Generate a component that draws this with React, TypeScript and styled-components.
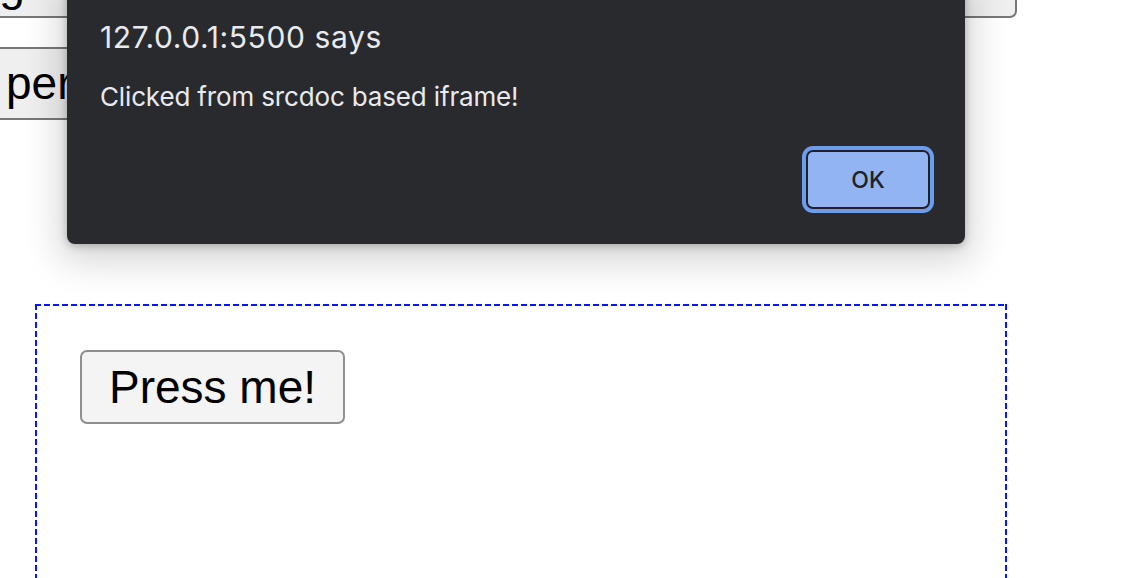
import React from "react";
import styled, { createGlobalStyle } from "styled-components";

const Global = createGlobalStyle`
  html, body {
    margin: 0;
    padding: 0;
    background: #ffffff;
    overflow: hidden;
  }
`;

const Page = styled.div`
  position: relative;
  width: 1124px;
  height: 578px;
  overflow: hidden;
  background: #ffffff;
`;

const Backdrop = styled.div`
  display: flex;
  flex-direction: column;
  align-items: flex-start;
`;

const PageButton = styled.button<{ $muted?: boolean }>`
  box-sizing: border-box;
  font-family: "Liberation Sans", Arial, sans-serif;
  font-size: 46px;
  line-height: 53px;
  color: #000000;
  background: ${(p) => (p.$muted ? "#efefef" : "#f4f4f4")};
  border: 2px solid ${(p) => (p.$muted ? "#777777" : "#8f8f8f")};
  border-radius: 7px;
  padding: 8px 27px;
  white-space: nowrap;
  text-align: left;
  cursor: default;
`;

const TopButton = styled(PageButton)`
  width: 1129px;
  margin-left: -112px;
  margin-top: -52px;
  padding: 8px 12px 5px;
`;

const WideButton = styled(PageButton)`
  margin-left: -23px;
  margin-top: 29px;
`;

const FrameBox = styled.div`
  box-sizing: border-box;
  margin-top: 184px;
  margin-left: 35px;
  width: 972px;
  height: 320px;
  padding: 46px 0 0 45px;
  background:
    repeating-linear-gradient(90deg, #0a14ff 0 6px, transparent 6px 9px) top left / 100% 2px no-repeat,
    repeating-linear-gradient(90deg, #0a14ff 0 6px, transparent 6px 9px) bottom left / 100% 2px no-repeat,
    repeating-linear-gradient(180deg, #0a14ff 0 6px, transparent 6px 9px) top left / 2px 100% no-repeat,
    repeating-linear-gradient(180deg, #0a14ff 0 6px, transparent 6px 9px) top right / 2px 100% no-repeat;
`;

const PressButton = styled(PageButton)`
  padding: 9px 27px 8px;
`;

const Dialog = styled.div`
  position: absolute;
  top: -20px;
  left: 67px;
  width: 898px;
  box-sizing: border-box;
  padding: 40px 35px 35px 33px;
  background: #292a2d;
  border-radius: 8px;
  box-shadow: 0 10px 36px 8px rgba(0, 0, 0, 0.16), 0 2px 8px rgba(0, 0, 0, 0.25);
  display: flex;
  flex-direction: column;
  font-family: Inter, "Noto Sans", sans-serif;
  color: #e8eaed;
`;

const Title = styled.div`
  font-size: 30px;
  line-height: 34px;
  letter-spacing: 0.6px;
`;

const Message = styled.div`
  margin-top: 27px;
  font-size: 26px;
  line-height: 32px;
  letter-spacing: -0.15px;
`;

const Actions = styled.div`
  margin-top: 37px;
  display: flex;
  justify-content: flex-end;
`;

const OkButton = styled.button`
  box-sizing: border-box;
  width: 124px;
  height: 59px;
  border: 2px solid #202124;
  border-radius: 7px;
  background: #93b4f3;
  box-shadow: 0 0 0 4px #6c9cee;
  color: #202124;
  font-family: Inter, "Noto Sans", sans-serif;
  font-size: 23px;
  font-weight: 500;
  padding: 0;
  cursor: default;
`;

export default function App() {
  return (
    <Page>
      <Global />
      <Backdrop>
        <TopButton $muted>dialog</TopButton>
        <WideButton $muted>permission</WideButton>
        <FrameBox>
          <PressButton>Press me!</PressButton>
        </FrameBox>
      </Backdrop>
      <Dialog>
        <Title>127.0.0.1:5500 says</Title>
        <Message>Clicked from srcdoc based iframe!</Message>
        <Actions>
          <OkButton>OK</OkButton>
        </Actions>
      </Dialog>
    </Page>
  );
}
